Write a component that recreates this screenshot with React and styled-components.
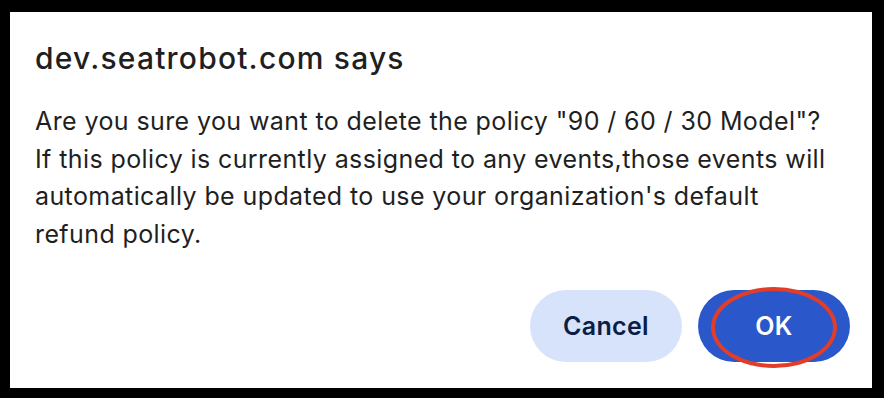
import React from "react";
import styled, { createGlobalStyle } from "styled-components";

const GlobalStyle = createGlobalStyle`
  html, body {
    margin: 0;
    padding: 0;
    background: #000;
  }
  body {
    font-family: Inter, "Noto Sans", "Liberation Sans", sans-serif;
  }
`;

const Frame = styled.div`
  width: 884px;
  height: 398px;
  box-sizing: border-box;
  padding: 12px 12px 10px 10px;
  background: #000;
`;

const Dialog = styled.div`
  height: 100%;
  box-sizing: border-box;
  background: #fff;
  padding: 29px 22px 0 25px;
  display: flex;
  flex-direction: column;
`;

const Title = styled.h1`
  margin: 0;
  font-size: 30px;
  line-height: 35px;
  font-weight: 500;
  letter-spacing: 1.2px;
  color: #1f1f1f;
`;

const Message = styled.p`
  margin: 27px 0 0;
  font-size: 25px;
  line-height: 37.5px;
  font-weight: 400;
  letter-spacing: 0.4px;
  color: #1f1f1f;
  white-space: nowrap;
`;

const Actions = styled.div`
  margin-top: auto;
  margin-bottom: 26px;
  display: flex;
  justify-content: flex-end;
  gap: 16px;
`;

const Button = styled.button`
  position: relative;
  width: 152px;
  height: 72px;
  border: none;
  border-radius: 36px;
  font-family: inherit;
  font-size: 25px;
  font-weight: 600;
  letter-spacing: 0.3px;
  cursor: pointer;
  background: ${(p) => (p.$primary ? "#2a57c9" : "#d6e3fa")};
  color: ${(p) => (p.$primary ? "#fff" : "#0c1d45")};
`;

const Highlight = styled.span`
  position: absolute;
  left: 13px;
  top: -3px;
  width: 126px;
  height: 81px;
  box-sizing: border-box;
  border: 4px solid #e03e2a;
  border-radius: 50%;
  pointer-events: none;
`;

export default function App() {
  return (
    <>
      <GlobalStyle />
      <Frame>
        <Dialog>
          <Title>dev.seatrobot.com says</Title>
          <Message>
            Are you sure you want to delete the policy "90 / 60 / 30 Model"?
            <br />
            If this policy is currently assigned to any events,those events will
            <br />
            automatically be updated to use your organization's default
            <br />
            refund policy.
          </Message>
          <Actions>
            <Button>Cancel</Button>
            <Button $primary>
              OK
              <Highlight />
            </Button>
          </Actions>
        </Dialog>
      </Frame>
    </>
  );
}
